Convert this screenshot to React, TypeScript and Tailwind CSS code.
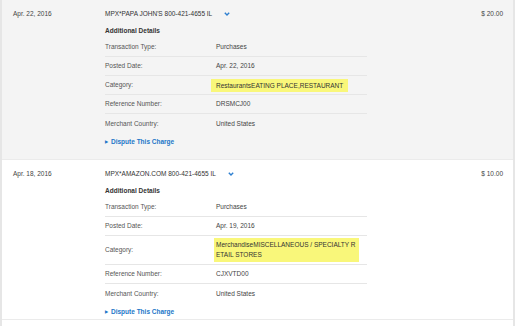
import React from 'react';

type Detail = { label: string; value: React.ReactNode; tall?: boolean };

interface Txn {
  date: string;
  merchant: string;
  amount: string;
  details: Detail[];
  shaded: boolean;
}

const Chevron = () => (
  <svg width="6" height="4" viewBox="0 0 6 4" className="ml-[12px] shrink-0">
    <path d="M0.8 0.8 L3 3 L5.2 0.8" fill="none" stroke="#2d7fd0" strokeWidth="1.4" />
  </svg>
);

const transactions: Txn[] = [
  {
    date: 'Apr. 22, 2016',
    merchant: "MPX*PAPA JOHN'S 800-421-4655 IL",
    amount: '$ 20.00',
    shaded: true,
    details: [
      { label: 'Transaction Type:', value: 'Purchases' },
      { label: 'Posted Date:', value: 'Apr. 22, 2016' },
      {
        label: 'Category:',
        value: (
          <span className="-ml-[5px] inline-block h-[13px] bg-[#f9f77a] px-[5px] leading-[13px] text-[#333]">
            RestaurantsEATING PLACE,RESTAURANT
          </span>
        ),
      },
      { label: 'Reference Number:', value: 'DRSMCJ00' },
      { label: 'Merchant Country:', value: 'United States' },
    ],
  },
  {
    date: 'Apr. 18, 2016',
    merchant: 'MPX*AMAZON.COM 800-421-4655 IL',
    amount: '$ 10.00',
    shaded: false,
    details: [
      { label: 'Transaction Type:', value: 'Purchases' },
      { label: 'Posted Date:', value: 'Apr. 19, 2016' },
      {
        label: 'Category:',
        tall: true,
        value: (
          <span className="-ml-[2px] block w-[145px] bg-[#f9f77a] px-[2px] py-[2px] leading-[9.6px] text-[#333]">
            MerchandiseMISCELLANEOUS / SPECIALTY R
            <br />
            ETAIL STORES
          </span>
        ),
      },
      { label: 'Reference Number:', value: 'CJXVTD00' },
      { label: 'Merchant Country:', value: 'United States' },
    ],
  },
];

const TransactionBlock = ({ txn }: { txn: Txn }) => (
  <div className={`flex h-[160px] border-b border-[#ebebeb] ${txn.shaded ? 'bg-[#f4f4f4]' : 'bg-white'}`}>
    {/* Date */}
    <div className="w-[103px] shrink-0 pl-[11px] pt-[9px] leading-[10px] text-[#444]">{txn.date}</div>

    {/* Details */}
    <div className="w-[262px] shrink-0 pt-[9px]">
      <div className="flex h-[10px] items-center leading-[10px] text-[#333]">
        <span>{txn.merchant}</span>
        <Chevron />
      </div>
      <div className="mt-[7px] h-[10px] font-bold leading-[10px] text-[#333]">Additional Details</div>
      <div className="mt-[2px]">
        {txn.details.map((d, i) => (
          <div
            key={d.label}
            className={`flex items-center ${d.tall ? 'h-[29px]' : 'h-[19px]'} ${
              i < txn.details.length - 1 ? 'border-b border-[#e6e6e6]' : ''
            }`}
          >
            <div className="w-[111px] shrink-0 text-[#555]">{d.label}</div>
            <div className="text-[#444]">{d.value}</div>
          </div>
        ))}
      </div>
      <div className="mt-[4px] flex h-[10px] items-center font-bold leading-[10px] text-[#2276c8]">
        <span className="mr-[3px] text-[4px]">&#9654;</span>
        Dispute This Charge
      </div>
    </div>

    {/* Amount */}
    <div className="flex-1 pr-[10px] pt-[9px] text-right leading-[10px] text-[#444]">{txn.amount}</div>
  </div>
);

export default function App() {
  return (
    <div
      className="h-[326px] w-[515px] overflow-hidden border-x-2 border-[#e6e6e6] bg-white text-[6.5px]"
      style={{ fontFamily: '"Liberation Sans", Arial, sans-serif' }}
    >
      {transactions.map((t) => (
        <TransactionBlock key={t.date} txn={t} />
      ))}
    </div>
  );
}
